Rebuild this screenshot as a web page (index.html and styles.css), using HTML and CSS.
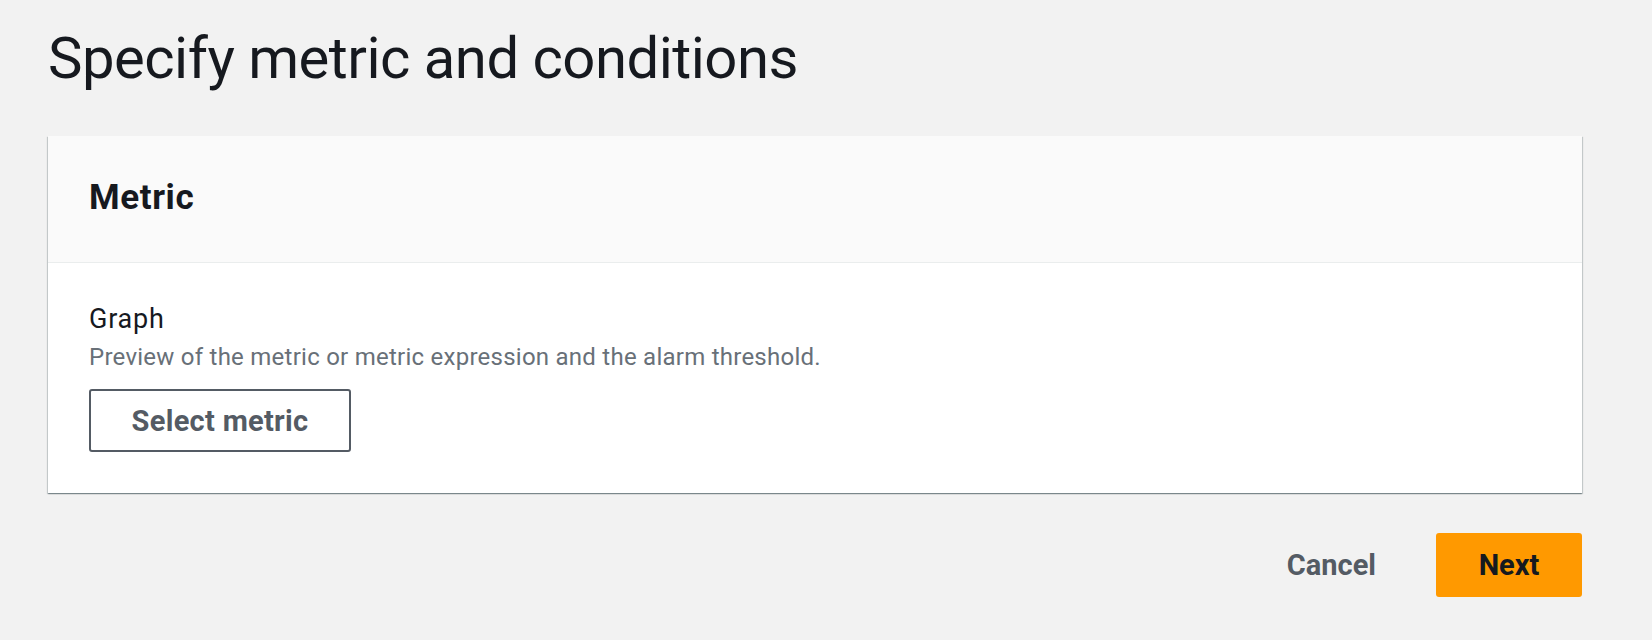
FILE: index.html
```html
<!DOCTYPE html>
<html lang="en">
<head>
    <meta charset="UTF-8">
    <meta name="viewport" content="width=device-width, initial-scale=1.0">
    <title>Specify metric and conditions</title>
    <link rel="stylesheet" href="styles.css">
</head>
<body>
    <div class="page">
        <h1 class="page-title">Specify metric and conditions</h1>

        <section class="card">
            <div class="card-header">
                <h2>Metric</h2>
            </div>
            <div class="card-body">
                <div class="field-label">Graph</div>
                <div class="field-desc">Preview of the metric or metric expression and the alarm threshold.</div>
                <button class="btn-normal">Select metric</button>
            </div>
        </section>

        <div class="actions">
            <button class="btn-link">Cancel</button>
            <button class="btn-primary">Next</button>
        </div>
    </div>
</body>
</html>
```

FILE: styles.css
```css
body {
    margin: 0;
    background-color: #f2f2f2;
    font-family: Roboto, "Liberation Sans", sans-serif;
    color: #16191f;
}

.page {
    width: 1534px;
    padding: 24px 0 0 48px;
}

.page-title {
    margin: 0;
    font-size: 58px;
    line-height: 68px;
    font-weight: 400;
    letter-spacing: -0.5px;
}

.card {
    margin-top: 44px;
    background-color: #fff;
    box-shadow: 0 1px 1px 0 rgba(0, 28, 36, 0.3), 1px 1px 1px 0 rgba(0, 28, 36, 0.15), -1px 1px 1px 0 rgba(0, 28, 36, 0.15);
}

.card-header {
    background-color: #fafafa;
    border-bottom: 1px solid #eaeded;
    padding: 41px 41px 43px;
}

.card-header h2 {
    margin: 0;
    font-size: 35px;
    line-height: 42px;
    font-weight: 700;
    letter-spacing: 0.6px;
}

.card-body {
    padding: 40px 41px 41px;
}

.field-label {
    font-size: 27px;
    line-height: 32px;
    letter-spacing: 0.8px;
}

.field-desc {
    margin-top: 6px;
    font-size: 24px;
    line-height: 32px;
    letter-spacing: 0.25px;
    color: #687078;
}

.btn-normal {
    margin-top: 16px;
    width: 262px;
    height: 63px;
    border: 2px solid #545b64;
    border-radius: 3px;
    background-color: #fff;
    color: #545b64;
    font-family: inherit;
    font-size: 29px;
    font-weight: 700;
    letter-spacing: 0.3px;
    cursor: pointer;
}

.actions {
    display: flex;
    justify-content: flex-end;
    align-items: center;
    gap: 48px;
    margin-top: 40px;
}

.btn-link {
    border: none;
    background: none;
    padding: 0 12px;
    color: #545b64;
    font-family: inherit;
    font-size: 29px;
    font-weight: 700;
    cursor: pointer;
}

.btn-primary {
    width: 146px;
    height: 64px;
    border: none;
    border-radius: 3px;
    background-color: #ff9900;
    color: #16191f;
    font-family: inherit;
    font-size: 29px;
    font-weight: 700;
    cursor: pointer;
}
```
